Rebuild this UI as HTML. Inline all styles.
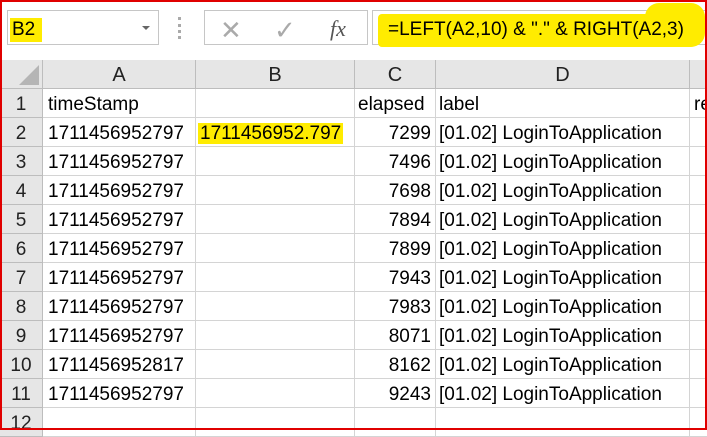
<!DOCTYPE html>
<html><head><style>
*{margin:0;padding:0;box-sizing:border-box}
body{width:707px;height:430px;overflow:hidden;background:#fff;font-family:"Liberation Sans",sans-serif;position:relative}
.frame{position:absolute;inset:0;border:2px solid #e00000;z-index:10;pointer-events:none}
.bar{position:absolute;left:0;top:0;width:707px;height:60px;background:#fff}
.box{position:absolute;background:#fff;border:1px solid #c6c6c6}
.hl{background:#ffec00}
.grid{position:absolute;left:0;top:60px}
.c{position:absolute;border-right:1px solid #d4d4d4;border-bottom:1px solid #d4d4d4;font-size:19px;line-height:31px;white-space:nowrap;overflow:hidden;color:#000}
.h{background:#e6e6e6;text-align:center;color:#222;border-color:#bdbdbd}
</style></head><body>
<div class="bar"></div>
<div class="box" style="left:7px;top:10px;width:152px;height:35px"></div>
<div style="position:absolute;left:10px;top:18px;width:32px;height:24px" class="hl"></div>
<div style="position:absolute;left:12px;top:19px;font-size:19px">B2</div>
<div style="position:absolute;left:142px;top:26px;border-left:4px solid transparent;border-right:4px solid transparent;border-top:4px solid #666"></div>
<div style="position:absolute;left:178px;top:17px;width:3px;height:22px;border-left:3px dotted #aaa"></div>
<div class="box" style="left:204px;top:10px;width:164px;height:35px"></div>
<div style="position:absolute;left:220px;top:15px;font-size:26px;color:#aaa">✕</div>
<div style="position:absolute;left:274px;top:15px;font-size:26px;color:#aaa">✓</div>
<div style="position:absolute;left:330px;top:16px;font-size:22px;font-family:'Liberation Serif',serif;font-style:italic;color:#555">fx</div>
<div class="box" style="left:372px;top:10px;width:340px;height:35px"></div>
<div class="hl" style="position:absolute;left:378px;top:14px;width:326px;height:33px;border-radius:4px 14px 14px 4px"></div>
<div class="hl" style="position:absolute;left:645px;top:3px;width:60px;height:44px;border-radius:14px"></div>
<div style="position:absolute;left:388px;top:19px;font-size:19px">=LEFT(A2,10) &amp; "." &amp; RIGHT(A2,3)</div>
<div class="grid" id="g"></div>
<div class="frame"></div>
<script>
var g=document.getElementById('g');
var cols=[[0,43],[43,196],[196,355],[355,436],[436,690],[690,720]];
function cell(x,y,w,h,t,cls,st){var d=document.createElement('div');d.className='c '+(cls||'');d.style.cssText='left:'+x+'px;top:'+y+'px;width:'+w+'px;height:'+h+'px;'+(st||'');d.innerHTML=t;g.appendChild(d);}
var hd=['','A','B','C','D',''];
for(var i=0;i<6;i++)cell(cols[i][0],0,cols[i][1]-cols[i][0],29,hd[i],'h','line-height:30px;font-size:20px');
cell(0,0,43,29,'<div style="position:absolute;right:3px;bottom:3px;width:0;height:0;border-left:20px solid transparent;border-bottom:20px solid #b5b5b5"></div>','h');
var el=[7299,7496,7698,7894,7899,7943,7983,8071,8162,9243];
for(var r=1;r<=12;r++){
 var y=29+(r-1)*29;
 cell(0,y,43,29,r,'h','');
 var a='',b='',c='',d='',e='';
 if(r==1){a='timeStamp';c='elapsed';d='label';e='re';}
 else if(r<=11){a=r==10?'1711456952817':'1711456952797';c=el[r-2];d='[01.02] LoginToApplication';}
 if(r==2)b='<span class="hl" style="padding:0 2px;margin-left:-2px">1711456952.797</span>';
 cell(43,y,153,29,a,'','padding-left:5px');
 cell(196,y,159,29,b,'','padding-left:4px');
 cell(355,y,81,29,c,'','padding:0 4px;text-align:'+(r==1?'left':'right')+';padding-left:3px');
 cell(436,y,254,29,d,'','padding-left:3px');
 cell(690,y,30,29,e,'','padding-left:4px');
}
</script>
</body></html>
